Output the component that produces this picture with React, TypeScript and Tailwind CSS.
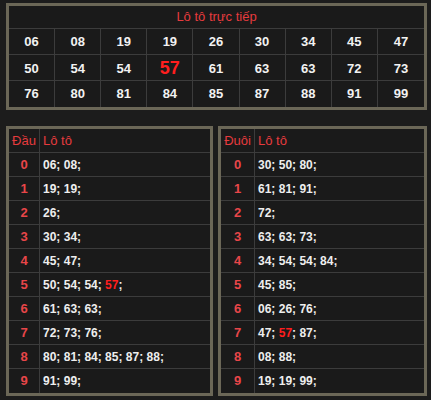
import React from 'react';

const FONT = { fontFamily: '"Liberation Sans", Arial, sans-serif' };

const grid: string[][] = [
    ['06', '08', '19', '19', '26', '30', '34', '45', '47'],
    ['50', '54', '54', '57', '61', '63', '63', '72', '73'],
    ['76', '80', '81', '84', '85', '87', '88', '91', '99'],
];

const HOT = '57';

const dau: string[][] = [
    ['06', '08'],
    ['19', '19'],
    ['26'],
    ['30', '34'],
    ['45', '47'],
    ['50', '54', '54', '57'],
    ['61', '63', '63'],
    ['72', '73', '76'],
    ['80', '81', '84', '85', '87', '88'],
    ['91', '99'],
];

const duoi: string[][] = [
    ['30', '50', '80'],
    ['61', '81', '91'],
    ['72'],
    ['63', '63', '73'],
    ['34', '54', '54', '84'],
    ['45', '85'],
    ['06', '26', '76'],
    ['47', '57', '87'],
    ['08', '88'],
    ['19', '19', '99'],
];

function LotoPanel({ label, rows, firstCol, className }: { label: string; rows: string[][]; firstCol: string; className: string }) {
    return (
        <div className={`border-[3px] border-[#6b6757] bg-[#1a1a1a] ${className}`}>
            {/* header */}
            <div className="flex h-[24px] border-b border-[#3c3c3c] text-[13px] text-[#e63b3e]">
                <div className={`${firstCol} flex items-center justify-center border-r border-[#3c3c3c]`}>{label}</div>
                <div className="flex items-center pl-[3px]">Lô tô</div>
            </div>
            {rows.map((nums, i) => (
                <div
                    key={i}
                    className={`flex h-[24px] ${i < rows.length - 1 ? 'border-b border-[#3c3c3c]' : ''}`}
                >
                    <div className={`${firstCol} flex items-center justify-center border-r border-[#3c3c3c] text-[13px] font-bold text-[#e84649]`}>
                        {i}
                    </div>
                    <div className="flex items-center pl-[3px] text-[12px] font-bold text-[#eeeeee]">
                        {nums.map((n, j) => (
                            <span key={j} className="whitespace-pre">
                                <span className={n === HOT ? 'text-[#ff1e1e]' : ''}>{n}</span>
                                {j < nums.length - 1 ? '; ' : ';'}
                            </span>
                        ))}
                    </div>
                </div>
            ))}
        </div>
    );
}

export default function App() {
    return (
        <div className="min-h-screen w-[431px] bg-[#1c1c1c] pt-[3px]" style={FONT}>
            {/* Lô tô trực tiếp */}
            <div className="ml-[6px] w-[421px] border-[3px] border-[#6b6757] bg-[#1a1a1a]">
                <div className="flex h-[23px] items-center justify-center border-b border-[#3c3c3c] text-[13px] text-[#e63b3e]">
                    Lô tô trực tiếp
                </div>
                {grid.map((row, r) => (
                    <div
                        key={r}
                        className={`grid h-[26px] grid-cols-9 ${r < grid.length - 1 ? 'border-b border-[#3c3c3c]' : 'h-[25px]'}`}
                    >
                        {row.map((n, c) => (
                            <div
                                key={c}
                                className={`flex items-center justify-center font-bold ${c < 8 ? 'border-r border-[#3c3c3c]' : ''} ${
                                    n === HOT ? 'text-[18px] text-[#ff1e1e]' : 'text-[13px] text-[#f2f2f2]'
                                }`}
                            >
                                {n}
                            </div>
                        ))}
                    </div>
                ))}
            </div>

            {/* Đầu / Đuôi */}
            <div className="mt-[16px] ml-[6px] flex gap-[5px]">
                <LotoPanel label="Đầu" rows={dau} firstCol="w-[31px]" className="w-[207px]" />
                <LotoPanel label="Đuôi" rows={duoi} firstCol="w-[34px]" className="w-[209px]" />
            </div>
        </div>
    );
}
